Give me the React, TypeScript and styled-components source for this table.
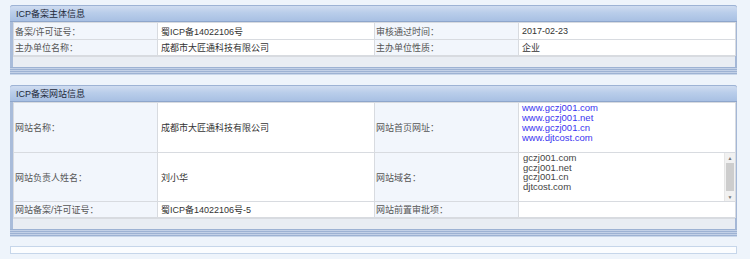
import React from "react";
import styled, { createGlobalStyle } from "styled-components";

const GlobalStyle = createGlobalStyle`
  body {
    margin: 0;
    background: #eef4fb;
    font-family: "Liberation Sans", "Noto Sans CJK SC", sans-serif;
  }
`;

const Page = styled.div`
  padding: 5px 13px 0 10px;
  display: flex;
  flex-direction: column;
  gap: 10px;
  width: 727px;
`;

const Panel = styled.div`
  display: flex;
  flex-direction: column;
  border-left: 3px solid #a9bcda;
  border-right: 2px solid #a4b7d6;
  border-radius: 3px 3px 0 0;
`;

const Header = styled.div`
  height: 17px;
  margin: 0 -2px 0 -3px;
  padding-left: 6px;
  display: flex;
  align-items: center;
  font-size: 9px;
  color: #1e2a3a;
  background: linear-gradient(to bottom, #cfdcf0 0%, #b9cdea 45%, #a8c0e3 100%);
  border-top: 1px solid #9db3d5;
  border-bottom: 1px solid #8ea6cb;
  border-radius: 3px 3px 0 0;
  box-sizing: border-box;
`;

const Table = styled.table`
  width: 722px;
  table-layout: fixed;
  border-collapse: collapse;
  font-size: 9px;
`;

const LabelCell = styled.td<{ $h?: number }>`
  height: ${(p) => p.$h ?? 15}px;
  padding: 0 1px;
  background: #f2f6fc;
  color: #555;
  border: 1px solid #d8dbe0;
  vertical-align: middle;
  white-space: nowrap;
`;

const ValueCell = styled.td<{ $top?: boolean }>`
  padding: 0 3px;
  background: #fff;
  color: #333;
  border: 1px solid #d8dbe0;
  vertical-align: ${(p) => (p.$top ? "top" : "middle")};
  white-space: nowrap;
`;

const Links = styled.div`
  display: flex;
  flex-direction: column;
  line-height: 10px;
`;

const Link = styled.a`
  color: #3a35f0;
  text-decoration: none;
  font-size: 9.5px;
`;

const ListBox = styled.div`
  display: flex;
  height: 48px;
  margin: 0 -3px;
`;

const ListItems = styled.div`
  flex: 1;
  display: flex;
  flex-direction: column;
  padding: 0 4px;
  line-height: 9.7px;
  font-size: 9.5px;
  color: #444;
`;

const ScrollBar = styled.div`
  width: 10px;
  display: flex;
  flex-direction: column;
  background: #f1f1f1;
  border-left: 1px solid #e6e6e6;
`;

const Arrow = styled.div`
  height: 9px;
  display: flex;
  align-items: center;
  justify-content: center;
  font-size: 5px;
  color: #777;
`;

const Thumb = styled.div`
  flex: 1;
  margin: 1px 1px;
  background: #cdcdcd;
`;

const Footer = styled.div`
  height: 10px;
  background: #e9edf3;
  border-top: 1px solid #d8dbe0;
`;

const Stripes = styled.div`
  height: 7px;
  margin: 0 -2px 0 -3px;
  background: repeating-linear-gradient(
    to bottom,
    #9db2d3 0px,
    #9db2d3 1px,
    #c3d1e7 1px,
    #c3d1e7 2px
  );
  border-bottom: 1px solid #c9d7ea;
`;

const EmptyBox = styled.div`
  height: 6px;
  margin-top: -1px;
  background: #fbfdff;
  border: 1px solid #c6d6ea;
`;

export default function App() {
  return (
    <>
      <GlobalStyle />
      <Page>
        <Panel>
          <Header>ICP备案主体信息</Header>
          <Table>
            <colgroup>
              <col style={{ width: 144 }} />
              <col style={{ width: 217 }} />
              <col style={{ width: 144 }} />
              <col style={{ width: 217 }} />
            </colgroup>
            <tbody>
              <tr>
                <LabelCell $h={16}>备案/许可证号：</LabelCell>
                <ValueCell>蜀ICP备14022106号</ValueCell>
                <LabelCell $h={16}>审核通过时间：</LabelCell>
                <ValueCell>2017-02-23</ValueCell>
              </tr>
              <tr>
                <LabelCell>主办单位名称：</LabelCell>
                <ValueCell>成都市大匠通科技有限公司</ValueCell>
                <LabelCell>主办单位性质：</LabelCell>
                <ValueCell>企业</ValueCell>
              </tr>
            </tbody>
          </Table>
          <Footer />
          <Stripes />
        </Panel>

        <Panel>
          <Header>ICP备案网站信息</Header>
          <Table>
            <colgroup>
              <col style={{ width: 144 }} />
              <col style={{ width: 217 }} />
              <col style={{ width: 144 }} />
              <col style={{ width: 217 }} />
            </colgroup>
            <tbody>
              <tr>
                <LabelCell $h={49}>网站名称：</LabelCell>
                <ValueCell>成都市大匠通科技有限公司</ValueCell>
                <LabelCell $h={49}>网站首页网址：</LabelCell>
                <ValueCell $top>
                  <Links>
                    <Link href="#">www.gczj001.com</Link>
                    <Link href="#">www.gczj001.net</Link>
                    <Link href="#">www.gczj001.cn</Link>
                    <Link href="#">www.djtcost.com</Link>
                  </Links>
                </ValueCell>
              </tr>
              <tr>
                <LabelCell $h={48}>网站负责人姓名：</LabelCell>
                <ValueCell>刘小华</ValueCell>
                <LabelCell $h={48}>网站域名：</LabelCell>
                <ValueCell $top>
                  <ListBox>
                    <ListItems>
                      <span>gczj001.com</span>
                      <span>gczj001.net</span>
                      <span>gczj001.cn</span>
                      <span>djtcost.com</span>
                    </ListItems>
                    <ScrollBar>
                      <Arrow>▲</Arrow>
                      <Thumb />
                      <Arrow>▼</Arrow>
                    </ScrollBar>
                  </ListBox>
                </ValueCell>
              </tr>
              <tr>
                <LabelCell>网站备案/许可证号：</LabelCell>
                <ValueCell>蜀ICP备14022106号-5</ValueCell>
                <LabelCell>网站前置审批项：</LabelCell>
                <ValueCell></ValueCell>
              </tr>
            </tbody>
          </Table>
          <Footer />
          <Stripes />
        </Panel>

        <EmptyBox />
      </Page>
    </>
  );
}
